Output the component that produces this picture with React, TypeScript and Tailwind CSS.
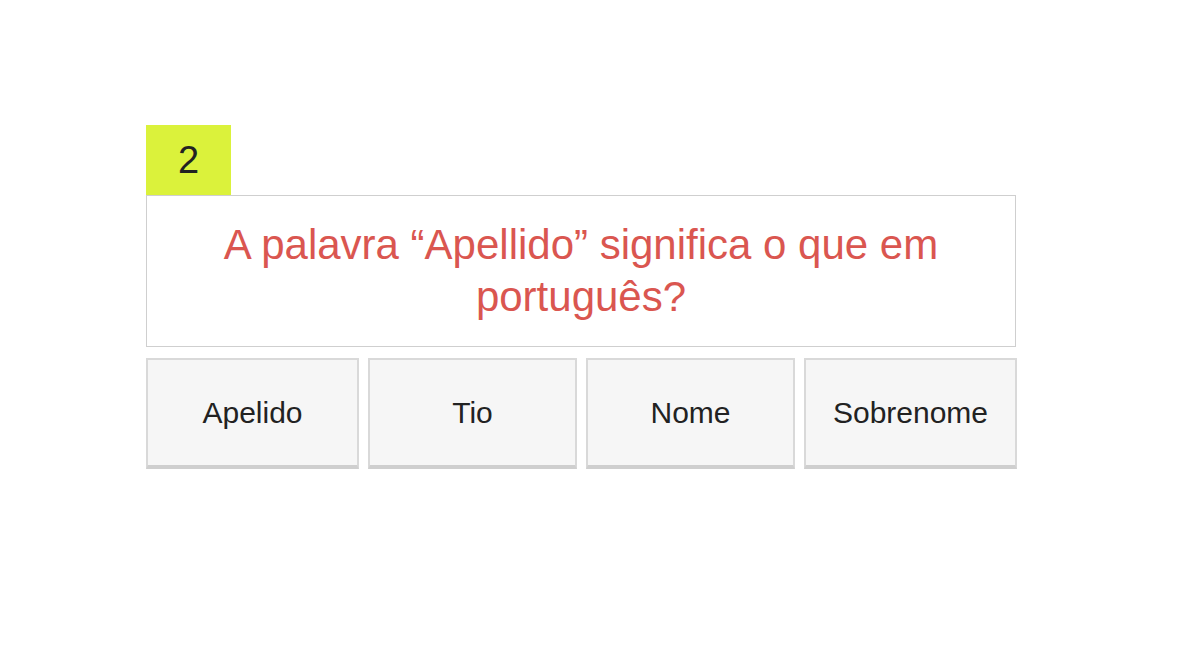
import React from 'react';

const options = ['Apelido', 'Tio', 'Nome', 'Sobrenome'];

export default function App() {
  return (
    <div className="w-[1200px] h-[657px] bg-white font-['Liberation_Sans',Arial,sans-serif]">
      <div className="pt-[125px] pl-[146px] w-[1016px]">
        {/* Question number */}
        <div className="w-[85px] h-[70px] bg-[#dbf23b] flex items-center justify-center text-[38px] text-[#222]">
          2
        </div>

        {/* Question */}
        <div className="border border-[#cfcfcf] bg-white py-[23px] px-8 text-center text-[42px] leading-[52px] text-[#da5650]">
          A palavra “Apellido” significa o que em português?
        </div>

        {/* Answers */}
        <div className="mt-[11px] grid grid-cols-[213px_209px_209px_213px] gap-[9px]">
          {options.map((opt) => (
            <button
              key={opt}
              className="h-[111px] bg-[#f6f6f6] border-2 border-[#d9d9d9] border-b-[4px] border-b-[#cfcfcf] text-[30px] text-[#222] flex items-center justify-center"
            >
              {opt}
            </button>
          ))}
        </div>
      </div>
    </div>
  );
}
